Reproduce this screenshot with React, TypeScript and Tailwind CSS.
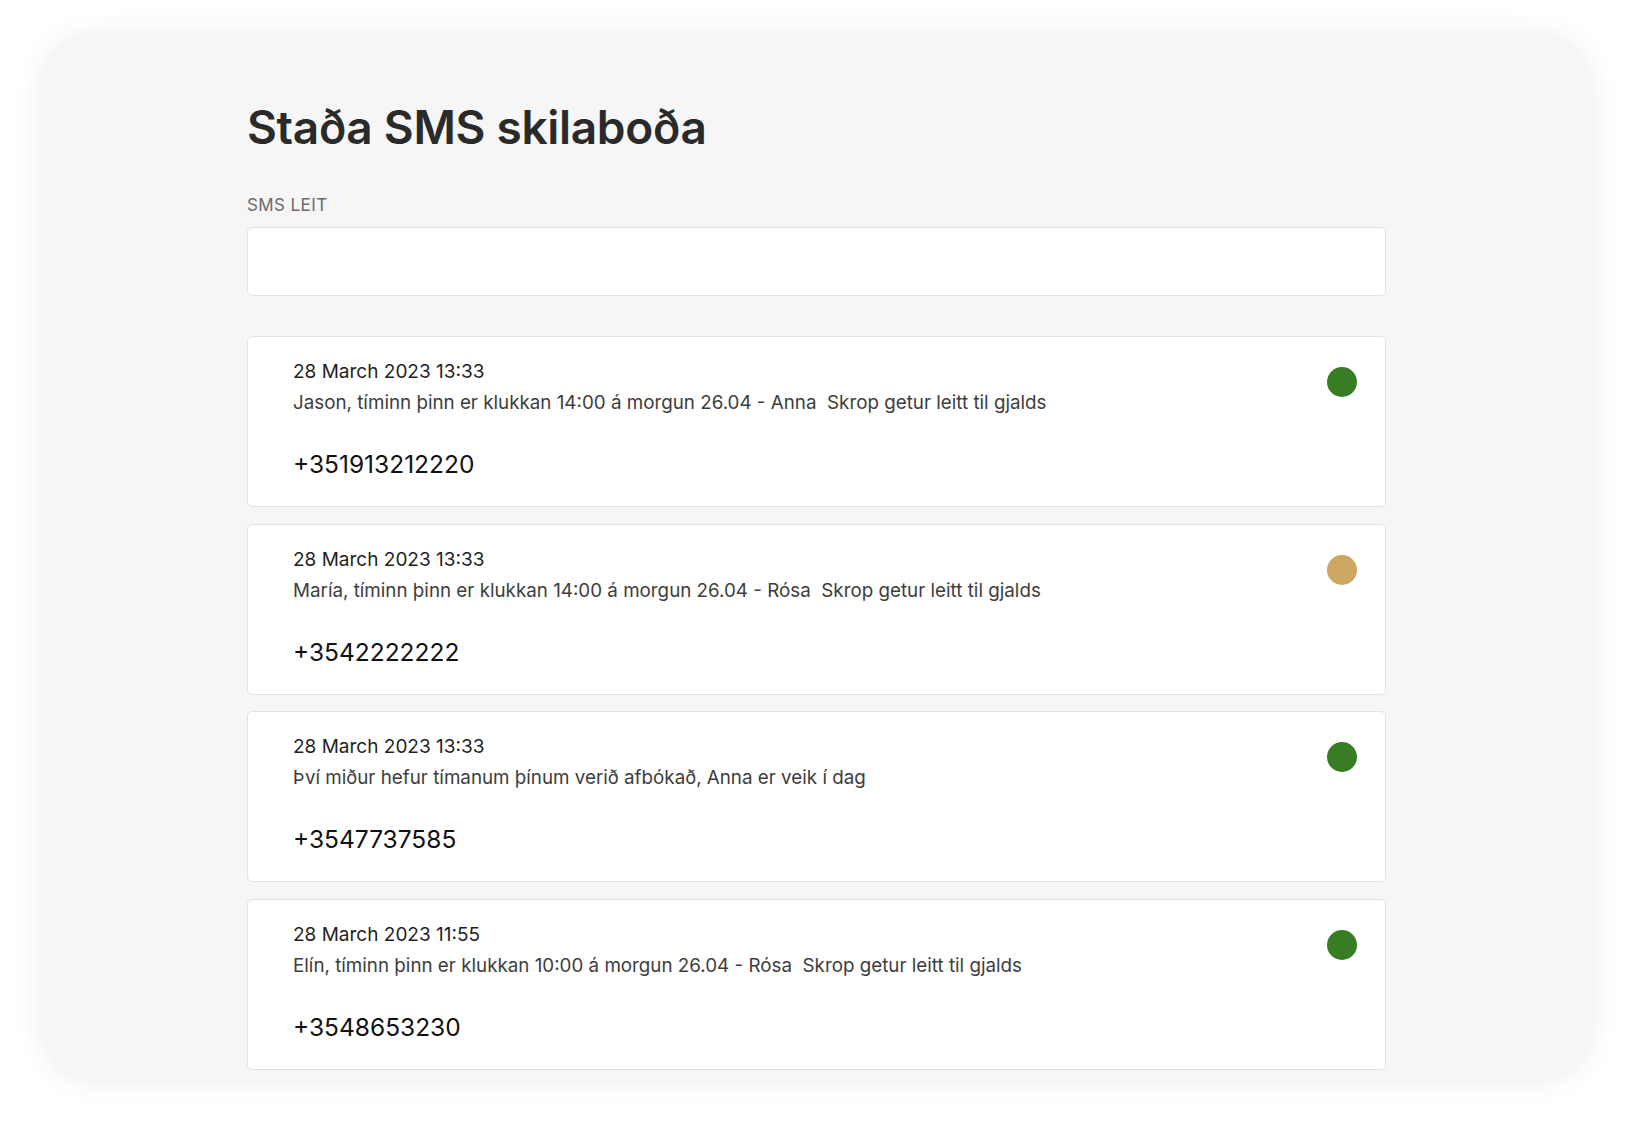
import React from "react";

const messages = [
  {
    date: "28 March 2023 13:33",
    text: "Jason, tíminn þinn er klukkan 14:00 á morgun 26.04 - Anna\u00a0 Skrop getur leitt til gjalds",
    phone: "+351913212220",
    ok: true,
  },
  {
    date: "28 March 2023 13:33",
    text: "María, tíminn þinn er klukkan 14:00 á morgun 26.04 - Rósa\u00a0 Skrop getur leitt til gjalds",
    phone: "+3542222222",
    ok: false,
  },
  {
    date: "28 March 2023 13:33",
    text: "Því miður hefur tímanum þínum verið afbókað, Anna er veik í dag",
    phone: "+3547737585",
    ok: true,
  },
  {
    date: "28 March 2023 11:55",
    text: "Elín, tíminn þinn er klukkan 10:00 á morgun 26.04 - Rósa\u00a0 Skrop getur leitt til gjalds",
    phone: "+3548653230",
    ok: true,
  },
];

export default function App() {
  return (
    <div
      className="w-[1634px] h-[1127px] bg-white overflow-hidden pt-[33px] pl-[40px]"
      style={{ fontFamily: "Inter, 'Noto Sans', sans-serif" }}
    >
      <div className="w-[1553px] h-[1049px] rounded-[56px] bg-[#f6f6f6] shadow-[0_0_28px_rgba(0,0,0,0.07)] pl-[207px] pt-[66px]">
        <div className="w-[1139px]">
          <h1 className="text-[46px] leading-[56px] font-semibold text-[#2a2a2a] tracking-[-0.3px]">
            Staða SMS skilaboða
          </h1>
          <div className="mt-[38px] text-[17px] leading-[24px] uppercase tracking-[0.4px] text-[#6b6b6b]">
            SMS leit
          </div>
          <div className="mt-[10px] h-[69px] rounded-[5px] border border-[#e2e2e2] bg-white" />
          <div className="mt-[40px] flex flex-col gap-[16.5px]">
            {messages.map((m, i) => (
              <div
                key={i}
                className="h-[171px] rounded-[5px] border border-[#e2e2e2] bg-white flex justify-between pl-[45px] pr-[28px] pt-[22px]"
              >
                <div className="flex flex-col">
                  <div className="text-[19px] leading-[26px] text-[#1f1f1f]">{m.date}</div>
                  <div className="text-[18.8px] leading-[36px] text-[#3d3d3d]">{m.text}</div>
                  <div className="mt-[28px] text-[24.5px] leading-[30px] text-[#111]">{m.phone}</div>
                </div>
                <div
                  className={
                    "mt-[8px] w-[30px] h-[30px] rounded-full shrink-0 " +
                    (m.ok ? "bg-[#387c24]" : "bg-[#cda761]")
                  }
                />
              </div>
            ))}
          </div>
        </div>
      </div>
    </div>
  );
}
